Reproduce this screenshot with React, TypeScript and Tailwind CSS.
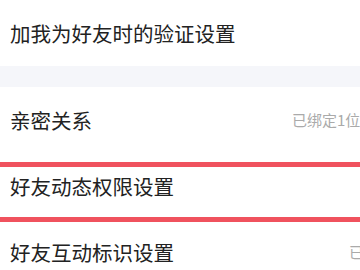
export default function App() {
    const font = { fontFamily: '"Noto Sans CJK SC", "Noto Sans", sans-serif' };
    return (
        <div className="relative w-[360px] h-[270px] overflow-hidden bg-white" style={font}>
            {/* row 1 */}
            <div className="h-[66px] flex items-center pl-[10px] text-[20.5px] text-[#222]">
                加我为好友时的验证设置
            </div>
            {/* section gap */}
            <div className="h-[21px] bg-[#f5f6fa]" />
            <div className="h-[66px] flex items-center justify-between pl-[10px] text-[20.5px] text-[#222]">
                <span>亲密关系</span>
                <span className="text-[15px] text-[#aaa] whitespace-nowrap w-[68px] overflow-hidden">已绑定1位好友</span>
            </div>
            <div className="h-[66px] flex items-center pl-[10px] text-[20.5px] text-[#222]">
                好友动态权限设置
            </div>
            <div className="h-[66px] flex items-center justify-between pl-[10px] text-[20.5px] text-[#222]">
                <span>好友互动标识设置</span>
                <span className="text-[15px] text-[#aaa] whitespace-nowrap w-[11px] overflow-hidden">已开启</span>
            </div>
            {/* highlight box */}
            <div className="absolute left-[-10px] right-[-10px] top-[162px] h-[60px] border-[5px] border-[#f0525e]" />
        </div>
    );
}
